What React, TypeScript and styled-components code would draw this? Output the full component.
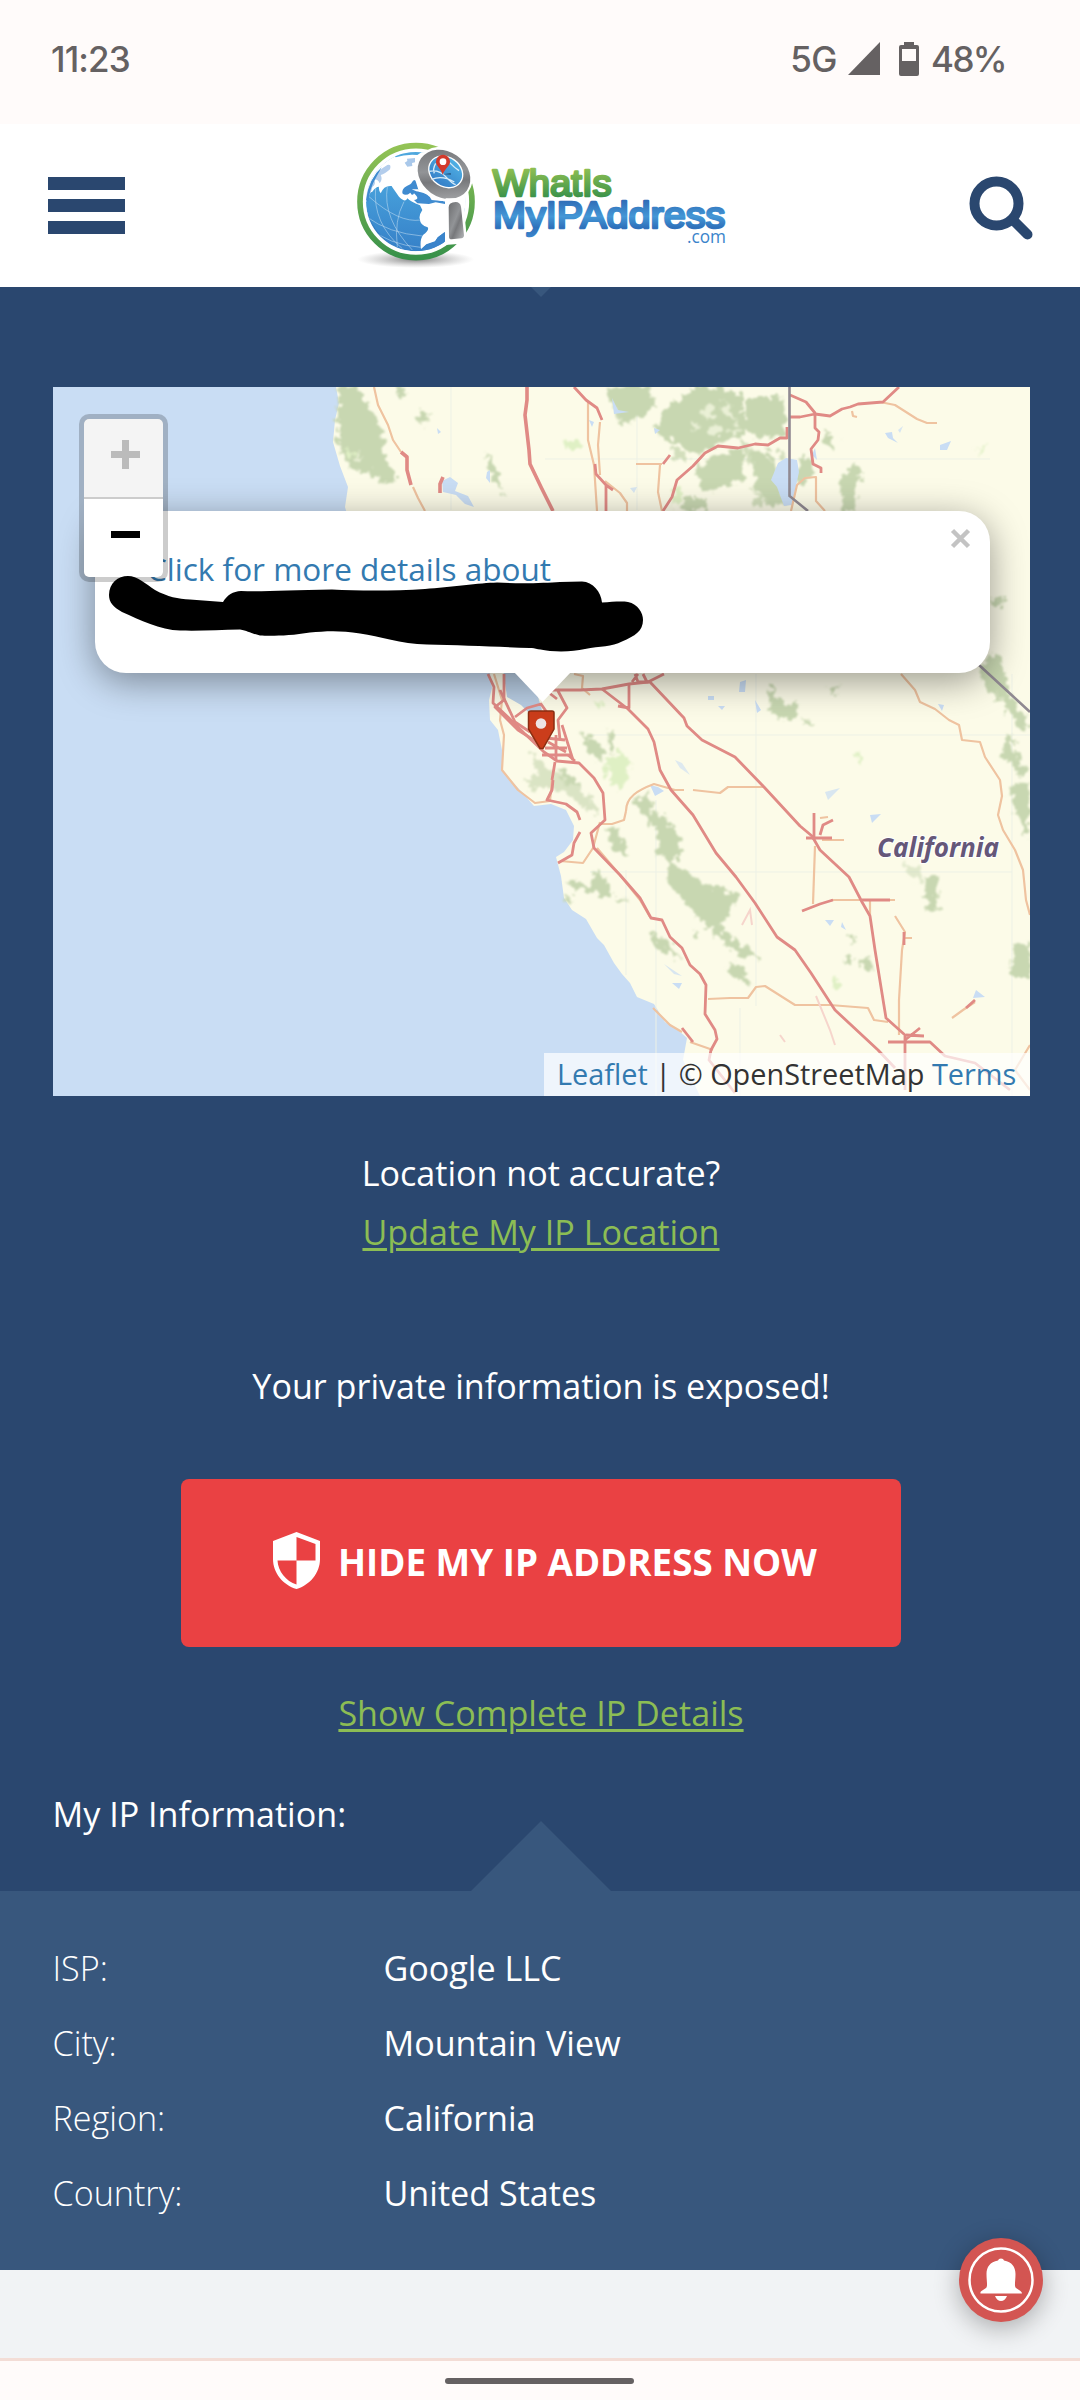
import React from 'react';
import styled, { createGlobalStyle } from 'styled-components';

const Global = createGlobalStyle`
  * { box-sizing: border-box; }
  html, body { margin: 0; padding: 0; }
  body { background: #fffbfa; }
`;

const Screen = styled.div`
  width: 1080px;
  height: 2400px;
  display: flex;
  flex-direction: column;
  overflow: hidden;
  background: #2a476f;
  color: #fff;
  font-family: 'Open Sans', 'Noto Sans', sans-serif;
  font-size: 34.125px;
`;

const StatusBar = styled.div`
  height: 124px;
  flex: none;
  display: flex;
  justify-content: space-between;
  align-items: center;
  padding: 0 74px 6px 51px;
  background: #fffbfa;
  color: #656162;
  font-family: Inter, Roboto, sans-serif;
  font-size: 35px;
  font-weight: 500;
`;

const StatusIcons = styled.div`
  display: flex;
  align-items: center;
  svg { display: block; }
`;

const StatusText = styled.span<{ $track?: number }>`
  letter-spacing: ${p => p.$track ?? 0}px;
  white-space: nowrap;
`;

const Header = styled.header`
  height: 163px;
  flex: none;
  display: flex;
  justify-content: space-between;
  align-items: flex-start;
  padding: 0 46px 0 48px;
  background: #fff;
`;

const MenuButton = styled.div`
  width: 77px;
  margin-top: 53px;
  display: flex;
  flex-direction: column;
  gap: 9px;
`;

const MenuBar = styled.span`
  height: 13px;
  background: #2a476f;
`;

const LogoSvg = styled.svg`
  display: block;
  margin-top: 6px;
  margin-right: 16px;
`;

const SearchIcon = styled.svg`
  display: block;
  margin-top: 51px;
`;

const Hero = styled.main`
  height: 1604px;
  flex: none;
  display: flex;
  flex-direction: column;
  align-items: center;
  position: relative;
  padding-left: 2px;
`;

const TopNotch = styled.div`
  width: 20px;
  height: 10px;
  background: #38577d;
  clip-path: polygon(0 0, 100% 0, 50% 100%);
`;

const MapFrame = styled.div`
  position: relative;
  width: 977px;
  height: 709px;
  margin-top: 90px;
  margin-left: 1px;
  overflow: hidden;
  background: #c9ddf4;
`;

const MapCanvas = styled.svg`
  display: block;
`;

const Popup = styled.div`
  position: absolute;
  left: 42px;
  top: 124px;
  width: 895px;
  height: 162px;
  padding: 35px 52px;
  border-radius: 31px;
  background: #fff;
  box-shadow: 0 8px 37px rgba(0, 0, 0, 0.4);
  font-size: 31.5px;
  line-height: 46px;
`;

const PopupLink = styled.a`
  color: #337ab0;
  white-space: nowrap;
`;

const PopupTip = styled.div`
  position: absolute;
  left: 461px;
  top: 285px;
  width: 57px;
  height: 30px;
  background: #fff;
  clip-path: polygon(0 0, 100% 0, 50% 100%);
`;

const PopupClose = styled.svg`
  position: absolute;
  right: 19px;
  top: 17px;
`;

const ZoomControl = styled.div`
  position: absolute;
  left: 26px;
  top: 27px;
  width: 89px;
  height: 168px;
  border: 5px solid rgba(0, 0, 0, 0.2);
  border-radius: 10px;
  background: #ccc;
  background-clip: padding-box;
  display: flex;
  flex-direction: column;
  gap: 2px;
  overflow: hidden;
`;

const ZoomButton = styled.div<{ $off?: boolean }>`
  flex: 1;
  display: flex;
  align-items: center;
  justify-content: center;
  padding-left: 4px;
  padding-bottom: 8px;
  background: ${p => (p.$off ? '#f4f4f4' : '#fff')};
  color: ${p => (p.$off ? '#bbb' : '#000')};
  border-radius: ${p => (p.$off ? '5px 5px 0 0' : '0 0 5px 5px')};
`;

const Attribution = styled.div`
  position: absolute;
  right: 0;
  bottom: 0;
  width: 486px;
  height: 43px;
  padding-left: 13px;
  background: rgba(255, 255, 255, 0.7);
  color: #333;
  font-size: 28.875px;
  line-height: 41px;
  white-space: nowrap;
  a { color: #337ab0; }
`;

const Scribble = styled.svg`
  position: absolute;
  left: 0;
  top: 0;
`;

const Line = styled.p<{ $top: number }>`
  margin: ${p => p.$top}px 0 0;
  height: 50px;
  line-height: 50px;
  white-space: nowrap;
`;

const GreenLink = styled.a`
  color: #8cbd54;
  text-decoration: underline;
  text-decoration-thickness: 3px;
  text-underline-offset: 3px;
`;

const HideButton = styled.button`
  width: 720px;
  height: 168px;
  margin-top: 68px;
  padding: 0 0 2px 92px;
  border: 0;
  border-radius: 8px;
  background: #ea4143;
  color: #fff;
  display: flex;
  align-items: center;
  font: 700 36.75px 'Open Sans', sans-serif;
  white-space: nowrap;
  svg { flex: none; margin: -4px 18px 0 0; }
`;

const InfoTitle = styled(Line)`
  align-self: flex-start;
  padding-left: 50.5px;
`;

const InfoNotch = styled.div`
  position: absolute;
  bottom: 0;
  left: 471px;
  width: 140px;
  height: 70px;
  background: #38577d;
  clip-path: polygon(50% 0, 100% 100%, 0 100%);
`;

const InfoPanel = styled.section`
  height: 379px;
  flex: none;
  padding: 40px 52.5px 0;
  background: #38577d;
`;

const InfoRow = styled.div`
  display: grid;
  grid-template-columns: 331px 1fr;
  height: 75px;
  line-height: 75px;
`;

const InfoLabel = styled.span`
  font-weight: 300;
`;

const Footer = styled.div`
  height: 88px;
  flex: none;
  background: #f1f3f5;
  position: relative;
`;

const BellButton = styled.div`
  position: absolute;
  left: 959px;
  top: -32px;
  width: 84px;
  height: 84px;
  border-radius: 50%;
  background: #d35552;
  box-shadow: 0 6px 26px rgba(0, 0, 0, 0.3);
  svg { display: block; }
`;

const NavBar = styled.div`
  flex: 1;
  border-top: 3px solid #f3ddd6;
  background: #fffbfa;
  display: flex;
  justify-content: center;
  align-items: flex-start;
  padding: 17px 1px 0 0;
`;

const NavHandle = styled.div`
  width: 189px;
  height: 6px;
  border-radius: 3px;
  background: #656162;
`;

const Logo = () => (
  <LogoSvg width="400" height="150" viewBox="0 0 1200 450">
    <defs>
      <linearGradient id="ring" x1="0" y1="0" x2="0" y2="1">
        <stop offset="0" stopColor="#93c355" /><stop offset="1" stopColor="#38914a" />
      </linearGradient>
      <linearGradient id="sea" x1="0" y1="0" x2="0" y2="1">
        <stop offset="0" stopColor="#4fb0e4" /><stop offset="1" stopColor="#3680c8" />
      </linearGradient>
      <linearGradient id="steel" x1="0" y1="0" x2="1" y2="1">
        <stop offset="0" stopColor="#6d6e70" /><stop offset=".45" stopColor="#929497" /><stop offset=".6" stopColor="#77787b" /><stop offset="1" stopColor="#b4b6b8" />
      </linearGradient>
      <linearGradient id="wordGreen" gradientUnits="userSpaceOnUse" x1="0" y1="115" x2="0" y2="205">
        <stop offset="0" stopColor="#8fbf52" /><stop offset="1" stopColor="#38914a" />
      </linearGradient>
      <linearGradient id="wordBlue" gradientUnits="userSpaceOnUse" x1="0" y1="210" x2="0" y2="320">
        <stop offset="0" stopColor="#2f6cb6" /><stop offset=".45" stopColor="#4497d6" /><stop offset=".75" stopColor="#2f71bb" /><stop offset="1" stopColor="#3a84cb" />
      </linearGradient>
      <radialGradient id="floor"><stop offset="0" stopColor="#555" stopOpacity=".75" /><stop offset="1" stopColor="#999" stopOpacity="0" /></radialGradient>
      <clipPath id="globeClip"><circle cx="230" cy="215" r="149" /></clipPath>
    </defs>
    <ellipse cx="230" cy="388" rx="175" ry="26" fill="url(#floor)" />
    <circle cx="231" cy="215" r="168" fill="#fff" stroke="url(#ring)" strokeWidth="17" />
    <g clipPath="url(#globeClip)">
      <circle cx="230" cy="215" r="149" fill="url(#sea)" />
      <path d="M82 260Q150 310 250 318M90 200Q180 280 245 270M110 175Q100 280 190 356M145 170Q130 265 220 360M195 215Q165 270 175 352M85 290Q150 345 245 352" fill="none" stroke="#cfe5f5" strokeWidth="2.5" opacity=".6" />
      <path d="M60 215 82 130 140 80 250 50 420 60 420 400 318 400 318 306 296 322 288 334 262 343 246 358C243 340 245 325 252 315Q272 300 266 292Q242 285 243 268Q238 258 250 240L243 226Q215 215 205 205Q200 220 180 200Q160 172 158 168Q135 165 125 190Q118 178 120 170Q110 170 100 185Q85 185 80 225Z" fill="#fff" />
      <path d="M81 205Q92 135 145 105Q158 102 153 118Q138 132 125 135Q132 148 122 160Q115 145 106 150Q112 162 100 171Q98 185 81 215Z" fill="#b3cdec" />
      <path d="M81 210Q90 145 128 112L110 145Q92 175 88 215Z" fill="#3f8bd0" />
      <path d="M165 76Q205 62 250 65L235 75Q200 72 170 82Z" fill="#4ea7de" />
      <path d="M197 98 205 93 204 86 228 84 228 97 219 99 220 108 205 110Z" fill="#a9c8ea" />
      <path d="M190 190C188 170 210 168 217 160Q228 140 232 160L240 185Q270 190 278 210L318 214 318 222 290 217 270 222 235 220 225 210Q245 208 225 190Q220 200 214 188Q200 200 190 190Z" fill="#3f8bd0" />
      <path d="M200 196 214 194 222 208 212 210Z" fill="#fff" /><path d="M218 178H238L246 186 232 184Z" fill="#fff" />
      <path d="M244 362 247 357 262 344 288 335 297 322 317 306V340Q285 362 244 366Z" fill="#3a84cb" />
      <path d="M80 240Q92 345 205 362L235 366Q130 365 80 240Z" fill="#2d6eb9" opacity=".45" />
    </g>
    <g transform="rotate(35 315 133)">
      <ellipse cx="315" cy="133" rx="90" ry="78" fill="#fff" />
      <ellipse cx="315" cy="133" rx="84" ry="68" fill="url(#steel)" />
      <ellipse cx="315" cy="124" rx="56" ry="46" fill="#fff" />
      <ellipse cx="315" cy="124" rx="52" ry="42" fill="url(#sea)" />
    </g>
    <path d="M270 124Q300 118 320 140T350 164M278 148Q310 135 346 156M332 98Q345 112 360 122M290 100Q280 118 286 130" fill="none" stroke="#d9ecf8" strokeWidth="4" />
    <path d="M311 133L335 129 336 134Z" fill="#245a86" />
    <path d="M311 134C306 115 291 108 291 95A21 21 0 0 1 333 95C333 108 317 115 311 134Z" fill="#d33a2c" />
    <circle cx="312" cy="95" r="10" fill="#fff" />
    <path d="M320 205H372L384 330 356 342 318 345Z" fill="#fff" />
    <path d="M329 232Q329 217 350 216Q363 216 366 230L375 316Q375 324 367 325L338 328Q330 328 330 320Z" fill="url(#steel)" />
    <g fontFamily="'Liberation Sans', Arial, sans-serif" strokeLinejoin="round" strokeLinecap="round">
      <text x="461" y="199" fontSize="109" textLength="357" lengthAdjust="spacingAndGlyphs" fill="url(#wordGreen)" stroke="url(#wordGreen)" strokeWidth="7.500">WhatIs</text>
      <text x="462" y="294" fontSize="109" textLength="697" lengthAdjust="spacingAndGlyphs" fill="url(#wordBlue)" stroke="url(#wordBlue)" strokeWidth="7.500">MyIPAddress</text>
    </g>
    <text x="1044" y="339" fontFamily="'Open Sans', sans-serif" fontSize="52" textLength="117" lengthAdjust="spacingAndGlyphs" fill="#3a84cb">.com</text>
  </LogoSvg>
);

const forest = '#c8d7b1';
const road = '#e08a85';
const minor = '#efc3a0';
const lake = '#c9ddf4';

const MapDrawing = () => (
  <MapCanvas width="977" height="709" viewBox="53 387 977 709">
    <defs>
      <filter id="woods" x="-10%" y="-10%" width="120%" height="120%">
        <feTurbulence type="fractalNoise" baseFrequency=".13" numOctaves="3" seed="4" />
        <feDisplacementMap in="SourceGraphic" scale="17" xChannelSelector="R" yChannelSelector="G" />
        <feGaussianBlur stdDeviation=".8" />
      </filter>
      <filter id="soft"><feGaussianBlur stdDeviation=".6" /></filter>
    </defs>
    <rect x="53" y="387" width="977" height="709" fill="#c9ddf4" />
    <path d="M336 387L339 403 335 420 333 442 340 466 348 487 345 507 360 560 470 640 490 673 492 688 489 700 490 720 498 730 502 750 502 770 520 790 534 806 551 804 566 810 574 826 573 840 564 852 556 857 561 876 564 898 572 910 586 919 597 938 604 945 614 963 622 974 630 983 637 997 654 1004 665 1022 678 1030 687 1038 683 1060 700 1096H1030V387Z" fill="#fcfbe8" />
    <path d="M503 669H520L536 690 542 710 534 718 521 705 507 697Z" fill="#b8cde3" />
    <g fill="none" stroke="#edf1e6" strokeWidth="1"><path d="M451 387V510M637 387V510M756 674V1006M1012 674V1096M590 872H1012M590 735H1030M626 870V975M656 800V1096M740 1008V1096M545 459H990" /></g>
    <g fill={forest} filter="url(#woods)">
      <path d="M338 387H358L372 415 384 430 382 455 398 475 388 485 370 471 354 472 342 455 338 440Z" />
      <path d="M605 387H646L656 402 645 417 634 417 628 426 620 421 612 402Z" />
      <path d="M654 431 664 412 680 397 697 387H722L743 396 738 412 750 420 742 438 722 440 702 455 682 446Z" />
      <path d="M748 397H782L788 422 784 435 757 440 744 425Z" />
      <path d="M700 462 742 449 746 480 710 491 694 480Z" />
      <path d="M750 450 768 452 788 500 770 505 756 488Z" />
      <path d="M684 497 706 497V511H678Z" />
      <path d="M840 480 854 462 862 473 856 489 858 511H841Z" />
      <path d="M800 455 815 462 808 482 796 485Z" />
      <path d="M420 412H431L426 424 417 418Z" /><path d="M395 390H405L401 400Z" />
      <path d="M486 452 494 465 504 493 496 486 488 470Z" />
      <path d="M822 432 836 437 832 452 826 445Z" />
      <path d="M992 598 1006 599 1001 606 992 606Z" />
      <path d="M990 653 1002 660 1008 690 1028 720 1025 735 1018 725 1005 707 997 690 1003 706 990 692 980 673Z" />
      <path d="M1005 731 1012 735 1018 760 1026 768 1023 778 1014 768 1003 755Z" />
      <path d="M1010 785 1028 782V838L1018 820Z" /><path d="M1013 944 1030 942V978H1010Z" />
      <path d="M768 688 778 700 795 705 796 718 783 721 770 708Z" /><path d="M770 680 774 694 766 690Z" />
      <path d="M804 716 812 724 806 726Z" />
      <path d="M528 748 545 765 565 780 575 786 594 802 599 814 580 806 560 789 544 788 530 790 525 778 540 775Z" opacity=".65" />
      <path d="M555 766 571 775 580 788 565 785Z" /><path d="M580 732 595 740 608 752 600 761 588 750Z" /><path d="M608 732 613 728V755L609 750Z" />
      <path d="M634 802 650 793 653 812 668 820 680 840 678 858 668 865 657 852 655 828Z" />
      <path d="M604 828 616 828 628 848 627 858 612 848Z" />
      <path d="M668 863 682 868 700 882 716 887 735 892 738 902 728 908 731 919 716 922 732 938 753 950 760 958 744 957 725 945 710 930 694 912 677 894 666 880Z" />
      <path d="M597 868 606 880 614 893 602 897 588 891 576 890 561 880 575 883 590 885Z" /><path d="M617 898 628 901 618 902Z" /><path d="M566 894 574 900 569 906Z" />
      <path d="M648 932 662 938 674 948 681 963 670 953 657 948Z" />
      <path d="M731 963 742 965 745 977 754 985 740 983 728 972Z" /><path d="M693 930 702 934 695 938Z" />
      <path d="M903 863 918 864 923 885 914 878Z" opacity=".5" /><path d="M926 876 938 876 936 892 938 911 927 910 925 899Z" />
      <path d="M850 934 857 940 850 944Z" /><path d="M846 957 854 960 848 965Z" /><path d="M859 958 873 960 871 972 862 968Z" />
      <path d="M828 690 842 685 836 692Z" />
      <path d="M672 448H684L690 462 676 460ZM740 440 752 446 760 470 748 462ZM752 490 762 494 764 508 754 506ZM776 455 786 448 784 462Z" opacity=".8" />
    </g>
    <g fill="#eaf0d6" filter="url(#woods)"><path d="M700 410 712 404 716 414 705 420ZM722 400 734 410 738 424 726 418ZM708 428 720 424 724 434 712 438ZM690 420 698 424 692 432ZM728 430 740 428 736 438ZM354 452 362 456 356 462Z" /></g>
    <g fill="#dff0c4" filter="url(#woods)">
      <path d="M604 762 622 752 631 763 627 782 619 791 608 778Z" /><path d="M853 751 864 758 860 764Z" /><path d="M832 980 840 980V990H832Z" />
      <path d="M565 442H580V449H570Z" /><path d="M980 445 988 446 978 453Z" /><path d="M345 448 356 452 350 460Z" /><path d="M595 702 605 704 600 708Z" />
      <path d="M672 492 684 488 680 500 670 506Z" />
    </g>
    <g fill={lake} filter="url(#soft)">
      <path d="M778 463 786 458 797 460 799 472 792 505 784 506 777 487 771 480Z" />
      <path d="M442 481 450 477 458 483 455 491 468 496 474 507 465 504 456 495 443 492Z" />
      <path d="M612 398 618 410 629 412 614 414Z" /><path d="M940 445 951 441 947 450 940 450Z" /><path d="M885 433 892 432 893 438 898 443 888 438Z" />
      <path d="M650 785 658 787 664 791 655 796Z" /><path d="M740 682 746 680 745 692 739 692Z" /><path d="M708 696H714V700H708Z" /><path d="M718 706 725 706 722 710Z" />
      <path d="M755 700 761 710 757 713Z" /><path d="M938 704 944 705 942 711Z" /><path d="M976 990 985 997 973 998Z" /><path d="M870 815 881 814 872 823Z" /><path d="M825 920 834 920 830 926Z" /><path d="M589 420 594 422 592 427Z" />
      <path d="M487 472 490 470V483L486 478Z" /><path d="M437 428 441 432 438 434Z" /><path d="M672 983H682L679 989Z" /><path d="M842 922 846 930 841 927Z" /><path d="M675 760 682 763 690 775 680 768Z" opacity=".6" /><path d="M664 964 682 976 674 974Z" opacity=".7" /><path d="M654 428 660 430 655 434Z" /><path d="M815 448 817 460 812 455Z" />
      <path d="M898 430 903 426 900 433ZM630 488 637 487 634 493ZM825 792 840 788 828 800Z" opacity=".7" />
    </g>
    <g fill="none" stroke={minor} strokeWidth="2.2" strokeLinejoin="round" filter="url(#soft)">
      <path d="M374 387 378 405 388 425 393 440 401 452M413 487 418 498 425 511" />
      <path d="M588 402V440L594 465 597 511M600 422 598 445 600 475M605 481 620 493 627 503V511M660 465 658 492 662 511M636 464H662" />
      <path d="M880 402 895 405 917 419 927 423H937M852 411 853 416 857 417M791 511 797 485 805 478 816 477V501L825 511" />
      <path d="M901 674 915 690 920 702 935 709 949 720 959 725 962 740 980 742 985 757 1000 780 1002 796 998 815 1003 830 1015 850 1023 870 1026 900 1030 915" />
      <path d="M574 674 583 676 582 688 590 695M626 811 624 820 612 824 600 824M626 811C626 797 638 790 654 784L675 790" />
      <path d="M672 790H684M693 790 720 793 728 787H764" />
      <path d="M815 846 813 904M831 900H862 895M870 900V915M895 916 905 932 902 950 899 1000V1035M905 938H912M822 840H844M820 818 828 817" />
      <path d="M708 999 730 998 748 998 756 987 765 986 795 1005H830L868 1008 874 1020 888 1022M653 1008 670 1025 682 1032M952 1018 963 1010 975 1002M560 861 583 863 593 848 600 822" />
      <path d="M494 674 502 700 500 720 504 735 502 770 518 790 535 803 550 801 552 780" /><path d="M597 848 620 875 640 900 650 917M690 1042 713 1050M1030 1045 1015 1070 1030 1090" />
    </g>
    <g fill="none" stroke="#f6d5cc" strokeWidth="2"><path d="M816 996 830 1030 835 1045M742 925 750 910 752 925M780 1035 785 1042" /></g>
    <g fill="none" stroke={road} strokeWidth="2.8" strokeLinejoin="round" filter="url(#soft)">
      <path d="M527 387V400L525 415 529 450 530 464 541 487 553 511M401 452 407 457 407 470 411 485M443 477 440 484V493" strokeWidth="3.6" />
      <path d="M574 387 586 400 597 408 602 420M595 464 596 474 606 485V511M606 485 613 490M670 455 663 464M663 511 672 497 677 480 693 466 705 453 718 446 738 448 755 444 768 445 780 438H787V427" />
      <path d="M790 395 806 402 815 413V428L819 432 818 440 811 449 813 464 821 468V473M790 417H800L815 414 830 416 842 409 850 407 858 404 883 402 899 387" />
      <path d="M488 674 494 687 493 703 510 719 524 733 544 752 557 761 579 763 594 778 603 793 605 820 591 833 594 848 620 875 640 898 651 918 662 920 670 937 682 948 690 965 700 974 706 985 705 1014 715 1030 717 1039 711 1050 709 1060 735 1093" />
      <path d="M504 674 504 700 495 707 518 730 540 744M548 690H580L602 689 629 684 648 682 664 674M557 689 567 708 558 720 560 740M568 755 575 761" />
      <path d="M515 717 527 708 541 704 548 714M548 692 557 699M602 689 628 709 648 729 654 742 660 770 671 790 693 815 716 853 736 877 755 903 777 937 795 950 811 973 835 1010 878 1050 895 1068M629 684V708L618 706M635 674 638 682H650L684 718 687 726 702 740 735 757 764 787 800 826 812 836 820 850 849 877 862 902 870 916 875 950 886 1018 905 1035V1090M632 682 638 674M647 682 643 674" />
      <path d="M555 762 552 780M580 832 574 843 572 855 558 863" />
      <path d="M814 813V840M806 838H832M820 835 823 825 833 820M802 911 820 904 833 900M862 900H890M904 932V945M888 1042H930L945 1056 975 1063 1010 1090M905 1040 920 1028M906 1035 924 1036M966 1008 975 1000" />
      <path d="M553 780 552 790 547 800 566 804 577 812 580 820M546 738 565 740M545 748H567M542 755H572M556 735V760M548 742 566 752M562 725 573 760M500 690 515 722 530 732M682 1028 693 1042" />
    </g>
    <g fill="none" stroke="#918a92" strokeWidth="2.6" filter="url(#soft)"><path d="M789.500 387V496L808 511M979 665 1030 712" /></g>
    <text x="877" y="857" fontFamily="'Noto Sans', sans-serif" fontWeight="700" fontStyle="italic" fontSize="26" textLength="122" lengthAdjust="spacingAndGlyphs" fill="#655779" stroke="#fff" strokeWidth="2" paintOrder="stroke">California</text>
    <path d="M528.500 713Q528.500 711 531 711H552Q554 711 554 713V729L543 748.500H540L528.500 729Z" fill="#cb3d1b" stroke="#8c2e12" strokeWidth="1.500" />
    <circle cx="541" cy="723.500" r="5.300" fill="#eee4e4" />
  </MapCanvas>
);

const details = [
  ['ISP:', 'Google LLC'],
  ['City:', 'Mountain View'],
  ['Region:', 'California'],
  ['Country:', 'United States'],
];

export default function App() {
  return (
    <Screen>
      <Global />
      <StatusBar>
        <StatusText $track={-0.9}>11:23</StatusText>
        <StatusIcons>
          <StatusText $track={-0.5}>5G</StatusText>
          <svg width="94" height="36" viewBox="838 41 94 36">
            <path d="M849 75 881 42V75Z" fill="#656162" />
            <path d="M905 42H915V45H918Q920 45 920 47V74Q920 76 918 76H902Q900 76 900 74V47Q900 45 902 45H905ZM903 49V61H917V49Z" fill="#656162" fillRule="evenodd" />
          </svg>
          <StatusText $track={-1.6}>48%</StatusText>
        </StatusIcons>
      </StatusBar>
      <Header>
        <MenuButton><MenuBar /><MenuBar /><MenuBar /></MenuButton>
        <Logo />
        <SearchIcon width="65" height="66" viewBox="0 0 65 66">
          <circle cx="27.500" cy="28.500" r="22" fill="none" stroke="#2a476f" strokeWidth="10" />
          <path d="M45 46 58.500 59.500" stroke="#2a476f" strokeWidth="10" strokeLinecap="round" />
        </SearchIcon>
      </Header>
      <Hero>
        <TopNotch />
        <MapFrame>
          <MapDrawing />
          <Popup>
            <PopupLink>Click for more details about</PopupLink>
            <PopupClose width="21" height="21" viewBox="0 0 21 21">
              <path d="M2.500 2.500 18.500 18.500M18.500 2.500 2.500 18.500" stroke="#c3c3c3" strokeWidth="4.500" />
            </PopupClose>
          </Popup>
          <PopupTip />
          <ZoomControl>
            <ZoomButton $off>
              <svg width="29" height="29"><path d="M0 14.500H29M14.500 0V29" stroke="currentColor" strokeWidth="7" /></svg>
            </ZoomButton>
            <ZoomButton>
              <svg width="29" height="29"><path d="M0 14.500H29" stroke="currentColor" strokeWidth="7" /></svg>
            </ZoomButton>
          </ZoomControl>
          <Scribble width="977" height="709" viewBox="53 387 977 709">
            <path d="M109 595C109 583 118 576 128 576C137 576 146 584 155 590C168 597 178 599 190 599.500L223 602C227 595 233 591.500 241 591C262 592 290 590 332 589.500C360 591 395 591 425 589C450 587 480 583 497 582.500C520 584 545 583 560 582L582 581.500C593 582 601 592 602 602.500C612 602 621 601 628 602C638 604 643 613 643 620C643 631 635 636 622 641.500C612 647 600 646 585 649C575 651 565 652 550 651C540 650 535 648 530 648C500 647 460 645 427 644.500C400 644 380 636 360 633.500C340 630 325 631 310 632.500C290 636 270 636 260 635.500C250 633 248 631 240 629.500C220 630 200 631 180 630.500C160 630 140 620 122 612C113 607 109 602 109 595Z" fill="#000" />
          </Scribble>
          <Attribution><a>Leaflet</a> | © OpenStreetMap <a>Terms</a></Attribution>
        </MapFrame>
        <Line $top={52}>Location not accurate?</Line>
        <Line $top={9}><GreenLink>Update My IP Location</GreenLink></Line>
        <Line $top={104}>Your private information is exposed!</Line>
        <HideButton>
          <svg width="47" height="57" viewBox="0 0 47 57">
            <path d="M23.500 0 47 9V27C47 41 37 53 23.500 57C10 53 0 41 0 27V9ZM23.500 5V28.500H4.500C5 39 13 49.500 23.500 52.500V28.500H42.500V12Z" fill="#fff" fillRule="evenodd" />
          </svg>
          HIDE MY IP ADDRESS NOW
        </HideButton>
        <Line $top={41}><GreenLink>Show Complete IP Details</GreenLink></Line>
        <InfoTitle $top={51}>My IP Information:</InfoTitle>
        <InfoNotch />
      </Hero>
      <InfoPanel>
        {details.map(([label, value]) => (
          <InfoRow key={label}><InfoLabel>{label}</InfoLabel><span>{value}</span></InfoRow>
        ))}
      </InfoPanel>
      <Footer>
        <BellButton>
          <svg width="84" height="84" viewBox="0 0 84 84" fill="#fff">
            <circle cx="42" cy="42" r="31.500" fill="none" stroke="#fff" strokeWidth="2.500" />
            <path d="M42 20.500Q44.500 20.500 45 22.500C53 24 56.500 29 56.500 36C56.500 43 55 48 57 50L61.500 53Q63 54 63 55.500H21.500Q21 54 22.500 53L27 50C29 48 27.500 43 27.500 36C27.500 29 31 24 39 22.500Q39.500 20.500 42 20.500ZM36 58H48Q46 63 42 63T36 58Z" />
          </svg>
        </BellButton>
      </Footer>
      <NavBar><NavHandle /></NavBar>
    </Screen>
  );
}
